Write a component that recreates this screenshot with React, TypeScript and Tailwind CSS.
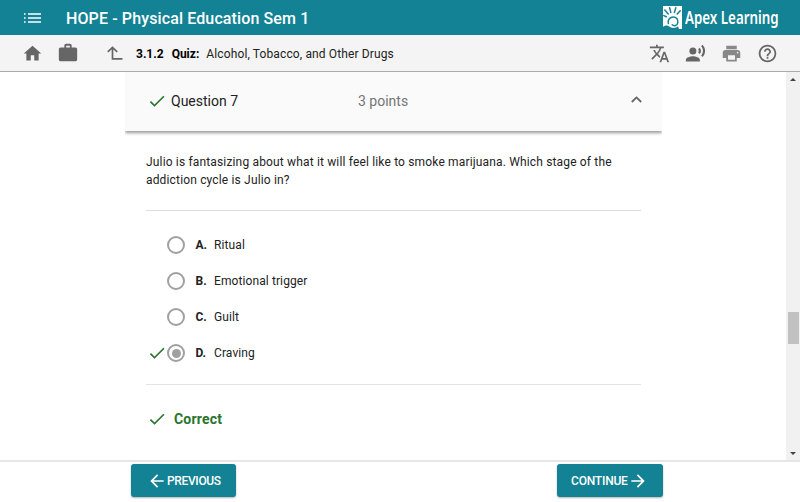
import type { ReactNode } from 'react';
import {
  MdArrowBack,
  MdArrowForward,
  MdCheck,
  MdHelpOutline,
  MdHome,
  MdPrint,
  MdRecordVoiceOver,
  MdTranslate,
  MdWork,
} from 'react-icons/md';

const choices = [
  { letter: 'A.', text: 'Ritual', correct: false },
  { letter: 'B.', text: 'Emotional trigger', correct: false },
  { letter: 'C.', text: 'Guilt', correct: false },
  { letter: 'D.', text: 'Craving', correct: true },
];

function MenuIcon() {
  return (
    <svg width="17" height="10" viewBox="0 0 17 10" fill="currentColor">
      <path d="M0 0.2h1.6v1.6H0zM0 4.2h1.6v1.6H0zM0 8.2h1.6v1.6H0zM4 0.2h13v1.6H4zM4 4.2h13v1.6H4zM4 8.2h13v1.6H4z" />
    </svg>
  );
}

function UpLevelIcon() {
  return (
    <svg width="16" height="15" viewBox="0 0 16 15" fill="none" stroke="currentColor" strokeWidth="1.7">
      <path d="M0.8 5.9L5.5 1.4L10.2 5.9M5.5 1.6V12.9H15.5" />
    </svg>
  );
}

function CollapseIcon() {
  return (
    <svg width="11" height="7" viewBox="0 0 11 7" fill="none" stroke="currentColor" strokeWidth="1.8">
      <path d="M0.8 6L5.5 1.4L10.2 6" />
    </svg>
  );
}

// Sun rising over a curled figure
function LogoMark() {
  return (
    <svg width="19" height="23" viewBox="0 0 19 23" className="shrink-0">
      <rect width="19" height="23" fill="#fff" />
      <g stroke="#128294" strokeWidth="1.5" fill="none" strokeLinecap="round">
        <path d="M1.8 4L5.2 8M6.6 1.8L7.8 6.4M12.8 1.8L11.4 6.4M17.2 4.8L14.2 8M0.8 9.6L3.4 10.8" />
        <path d="M5.4 17.6C4.4 13.6 7.2 11 10.2 11C13.6 11 15.4 13.8 14.8 16.8C14.2 19.8 11 20.4 9.2 18.8" />
      </g>
      <path d="M0 23V20.8C2.5 18.8 5 19.2 7 21C9.5 22.4 13 22.2 15 20.2L16 23z" fill="#128294" />
    </svg>
  );
}

function NavButton({ children, className }: { children: ReactNode; className: string }) {
  return (
    <button
      className={`flex h-[33px] items-center rounded-[3px] bg-[#128294] text-[12px] font-medium text-white shadow-[0_1px_2px_rgba(0,0,0,0.3)] ${className}`}
    >
      {children}
    </button>
  );
}

export default function App() {
  return (
    <div className="flex h-[502px] w-[800px] flex-col overflow-hidden bg-white font-['Roboto',sans-serif] text-[#222]">
      {/* Course header */}
      <header className="flex h-[35px] shrink-0 items-center bg-[#128294] pl-6 text-white">
        <MenuIcon />
        <h1 className="ml-[25px] w-[597px] shrink-0 pt-px text-[16px] leading-[35px] font-medium tracking-[0.12px] whitespace-nowrap">
          HOPE - Physical Education Sem 1
        </h1>
        <LogoMark />
        <span className="ml-[3px] w-[100px] origin-left scale-x-[0.785] pt-px font-['Noto_Sans',sans-serif] text-[17px] font-semibold whitespace-nowrap">
          Apex Learning
        </span>
      </header>

      {/* Activity toolbar */}
      <div className="flex h-[37px] shrink-0 items-center border-b border-[#aaa] bg-[#f4f4f4] pl-[22px] text-[#666]">
        <MdHome size={21} className="mt-px" />
        <MdWork size={22} className="ml-[14px]" />
        <span className="ml-7">
          <UpLevelIcon />
        </span>
        <p className="ml-[13px] w-[513px] pt-px text-[12px] tracking-[0.13px] whitespace-nowrap text-[#222]">
          <b className="tracking-normal text-black">3.1.2</b>
          <b className="ml-2 tracking-normal text-black">Quiz:</b>
          <span className="ml-[7px]">Alcohol, Tobacco, and Other Drugs</span>
        </p>
        <MdTranslate size={21} className="mt-px" />
        <MdRecordVoiceOver size={21} className="mt-px ml-[15px]" />
        <MdPrint size={21} className="mt-px ml-[15px] text-[#888]" />
        <MdHelpOutline size={21} className="mt-px ml-[15px]" />
      </div>

      <div className="flex h-[388px] shrink-0">
        <main className="w-[786px] pl-[125px]">
          {/* Question header */}
          <div className="flex h-[59px] w-[537px] items-center bg-[#fafafa] pl-[22px] shadow-[0_2px_3px_rgba(0,0,0,0.4)] [clip-path:inset(0_0_-6px_0)]">
            <MdCheck size={20} className="mb-[2px] text-[#2a752c]" />
            <h2 className="ml-[4px] w-[187px] text-[14px]">Question 7</h2>
            <span className="w-[273px] text-[14px] text-[#757575]">3 points</span>
            <span className="mb-[5px] text-[#666]">
              <CollapseIcon />
            </span>
          </div>

          <div className="ml-[21px] w-[495px]">
            <p className="h-[80px] border-b border-[#ddd] pt-[22px] text-[12px] leading-[18px] tracking-[0.16px] whitespace-nowrap">
              Julio is fantasizing about what it will feel like to smoke marijuana. Which stage of the
              <br />
              addiction cycle is Julio in?
            </p>
            <ul className="h-[174px] border-b border-[#e4e4e4] pt-4">
              {choices.map((choice) => (
                <li key={choice.letter} className="flex h-[36.1px] items-center text-[12px]">
                  <span className="flex w-[21px] justify-center text-[#2a752c]">
                    {choice.correct && <MdCheck size={20} className="shrink-0" />}
                  </span>
                  <span className="flex size-[18px] items-center justify-center rounded-full border-2 border-[#a0a0a0]">
                    {choice.correct && <span className="size-[9px] rounded-full bg-[#a0a0a0]" />}
                  </span>
                  <b className="ml-[10.5px] w-[18.5px]">{choice.letter}</b>
                  <span className="tracking-[0.1px]">{choice.text}</span>
                </li>
              ))}
            </ul>
            <div className="flex h-[69px] items-center text-[#2a752c]">
              <MdCheck size={20} className="mb-[2px] ml-px" />
              <strong className="ml-[7px] text-[14px] tracking-[0.2px]">Correct</strong>
            </div>
          </div>
        </main>

        {/* Scroll track */}
        <div className="flex w-[14px] flex-col items-center bg-[#f1f1f1] pt-[6px] pb-[5px]">
          <i className="border-x-[3px] border-b-[3px] border-x-transparent border-b-[#444]" />
          <div className="mt-[231px] h-8 w-[11px] bg-[#c1c1c1]" />
          <i className="mt-auto border-x-[3px] border-t-[3px] border-x-transparent border-t-[#444]" />
        </div>
      </div>

      <footer className="flex grow items-start border-t-2 border-[#e6e6e6] pt-[2px] pl-[131px]">
        <NavButton className="w-[105px] pl-[16px]">
          <MdArrowBack size={20} />
          <span className="tracking-[-0.35px]">PREVIOUS</span>
        </NavButton>
        <NavButton className="ml-[321px] w-[106px] pl-[14px]">
          <span className="tracking-[-0.2px]">CONTINUE</span>
          <MdArrowForward size={20} />
        </NavButton>
      </footer>
    </div>
  );
}
